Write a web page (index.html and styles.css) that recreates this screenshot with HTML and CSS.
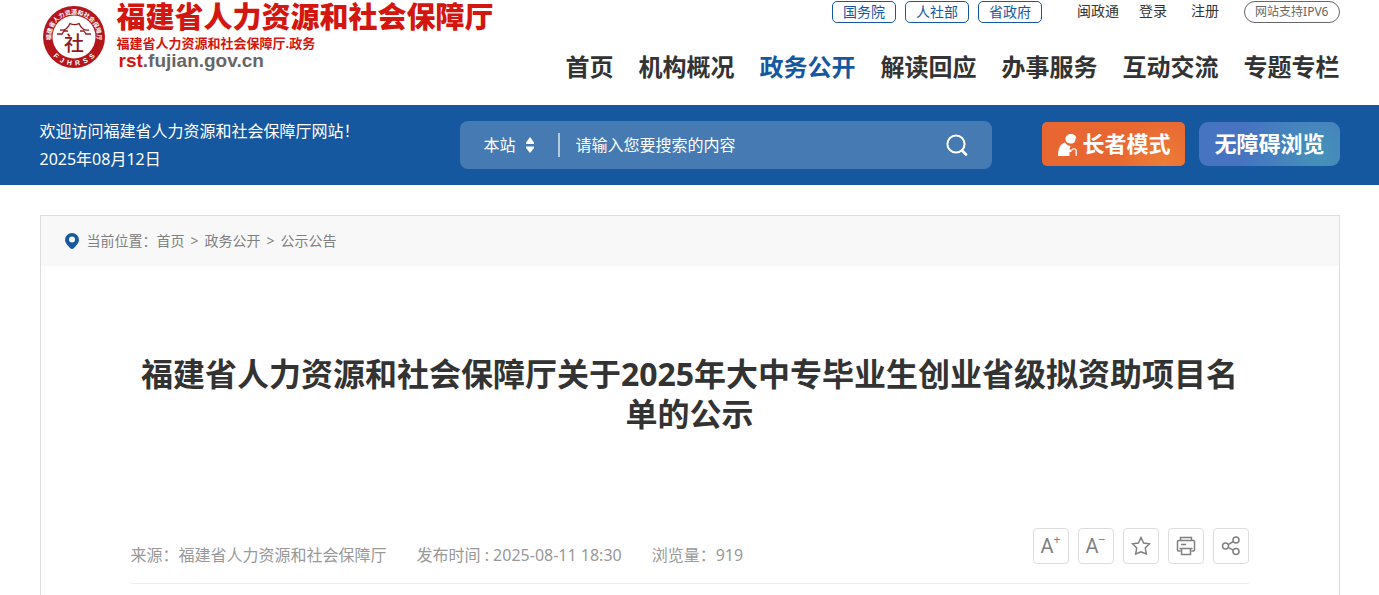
FILE: index.html
```html
<!DOCTYPE html>
<html lang="zh-CN">
<head>
  <meta charset="UTF-8">
  <title>福建省人力资源和社会保障厅</title>
  <meta name="viewport" content="width=device-width, initial-scale=1">
  <link rel="stylesheet" href="styles.css">
</head>
<body>

  <header class="header wrap">
    <a class="logo" href="#">
      <svg class="seal" viewBox="0 0 64 64" width="64" height="64" aria-hidden="true">
        <defs>
          <path id="arcTop" d="M12 43.500A23 23 0 1 1 52 43.500"/>
          <path id="arcBottom" d="M3.500 32A28.500 28.500 0 0 0 60.500 32"/>
        </defs>
        <circle cx="32" cy="32" r="31" fill="#b5161c"/>
        <circle cx="32" cy="32" r="21.500" fill="#fff"/>
        <text class="seal-top"><textPath href="#arcTop" startOffset="50%">福建省人力资源和社会保障厅</textPath></text>
        <text class="seal-bottom"><textPath href="#arcBottom" startOffset="50%">F&nbsp; J&nbsp; H&nbsp; R&nbsp; S&nbsp; S</textPath></text>
        <path d="M15 29H20L22 26M18 25C23 26 26 23 28 18.500C31 20 34 20 37 18.500C39 23 42 26 47 25M42 26L44 29H49M22 26H26M38 26H42" fill="none" stroke="#8f1a20" stroke-width="1.300"/>
        <text class="seal-mid" x="32" y="46">社</text>
      </svg>
      <span class="logo-text">
        <strong class="logo-name">福建省人力资源和社会保障厅</strong>
        <span class="logo-sub">福建省人力资源和社会保障厅.政务</span>
        <span class="logo-url"><b>rst</b>.fujian.gov.cn</span>
      </span>
    </a>

    <div class="header-right">
      <div class="top-links">
        <div class="gov-links">
          <a href="#">国务院</a>
          <a href="#">人社部</a>
          <a href="#">省政府</a>
        </div>
        <div class="user-links">
          <a href="#">闽政通</a>
          <a href="#">登录</a>
          <a href="#" class="reg">注册</a>
        </div>
        <a class="ipv6" href="#">网站支持IPV6</a>
      </div>
      <nav class="nav">
        <a href="#">首页</a>
        <a href="#">机构概况</a>
        <a href="#" class="active">政务公开</a>
        <a href="#">解读回应</a>
        <a href="#">办事服务</a>
        <a href="#">互动交流</a>
        <a href="#">专题专栏</a>
      </nav>
    </div>
  </header>

  <div class="banner">
    <div class="wrap banner-inner">
      <div class="welcome">
        <p>欢迎访问福建省人力资源和社会保障厅网站！</p>
        <p>2025年08月12日</p>
      </div>

      <form class="search">
        <label class="scope">
          <select aria-label="搜索范围">
            <option>本站</option>
          </select>
          <svg viewBox="0 0 8 16" width="8" height="16" aria-hidden="true">
            <path d="M4 0L8 5.500V7H0V5.500zM0 9.500H8V11L4 16L0 11z" fill="#fff"/>
          </svg>
        </label>
        <input type="text" aria-label="搜索" placeholder="请输入您要搜索的内容">
        <button type="submit" aria-label="搜索">
          <svg viewBox="0 0 22 22" width="22" height="22" fill="none" stroke="#fff" stroke-width="2" stroke-linecap="round">
            <circle cx="10" cy="10" r="8.600"/>
            <path d="M16 16.500l4 4" stroke-width="2.600"/>
          </svg>
        </button>
      </form>

      <div class="modes">
        <button type="button" class="elder">
          <svg viewBox="0 0 20 22" width="20" height="22" aria-hidden="true">
            <path d="M1 22C1 15 3 10 8 8.500C9.500 11 11.500 12 13.500 12L12.500 15L14.500 16.500V18H12.500V22z" fill="#fff"/>
            <path d="M8.500 5C8.500 2 11 0 14 0C17 0 19 1.500 19.500 4.500H18.500C18.500 8 17 9.500 14.500 9.500C11 9.500 8.500 8 8.500 5z" fill="#fff"/>
            <path d="M14.500 16.500C15 14.500 19.200 14 19.200 17V22" fill="none" stroke="#fff" stroke-width="1.300"/>
          </svg>
          长者模式
        </button>
        <button type="button" class="access">无障碍浏览</button>
      </div>
    </div>
  </div>

  <main class="wrap article">
    <div class="crumbs">
      <svg viewBox="0 0 14 16" width="14" height="16" aria-hidden="true">
        <path d="M7 0A7 7 0 0 1 14 7C14 10 11.500 12 9 15Q7 17 5 15C2.500 12 0 10 0 7A7 7 0 0 1 7 0zM7 3.500A3 3 0 1 0 7 9.500A3 3 0 1 0 7 3.500z" fill="#16589f" fill-rule="evenodd"/>
      </svg>
      <span>当前位置：</span>
      <a href="#">首页</a>
      <i>&gt;</i>
      <a href="#">政务公开</a>
      <i>&gt;</i>
      <a href="#">公示公告</a>
    </div>

    <div class="content">
      <h1>福建省人力资源和社会保障厅关于2025年大中专毕业生创业省级拟资助项目名单的公示</h1>

      <div class="meta">
        <div class="meta-text">
          <span>来源：福建省人力资源和社会保障厅</span>
          <span>发布时间 : 2025-08-11 18:30</span>
          <span>浏览量：919</span>
        </div>
        <div class="tools">
          <button type="button" aria-label="放大字体"><span class="letter">A</span><span class="sign">+</span></button>
          <button type="button" aria-label="缩小字体"><span class="letter">A</span><span class="sign">−</span></button>
          <button type="button" aria-label="收藏">
            <svg viewBox="0 0 20 20" width="20" height="20">
              <path d="M10 1.500L12.600 7L18.500 7.800L14.300 12L15.300 18L10 15.800L4.700 18L5.700 12L1.500 7.800L7.400 7z"/>
            </svg>
          </button>
          <button type="button" aria-label="打印">
            <svg viewBox="0 0 20 20" width="20" height="20">
              <path d="M4.500 4.500V1.500H15.500V4.500M4.500 15H2.500Q1.500 15 1.500 14V5.500Q1.500 4.500 2.500 4.500H17.500Q18.500 4.500 18.500 5.500V14Q18.500 15 17.500 15H15.500M5 8.500H10M3.500 12.500H16.500M5.500 12.500V18.500H14.500V12.500"/>
            </svg>
          </button>
          <button type="button" aria-label="分享">
            <svg viewBox="0 0 20 20" width="20" height="20">
              <circle cx="4.500" cy="10" r="3"/>
              <circle cx="15" cy="4" r="3"/>
              <circle cx="15" cy="15.500" r="3"/>
              <path d="M7.200 8.600L12.300 5.500M7.200 11.400L12.300 14.200"/>
            </svg>
          </button>
        </div>
      </div>
    </div>
  </main>

</body>
</html>
```
FILE: styles.css
```css
* { box-sizing: border-box; }

body {
  margin: 0;
  font-family: "Noto Sans", "Noto Sans CJK SC", sans-serif;
  font-size: 16px;
  color: #333;
  background: #fff;
}

a {
  color: inherit;
  text-decoration: none;
}

p { margin: 0; }

button, input, select {
  font-family: inherit;
  border: none;
  padding: 0;
  background: none;
}

button { cursor: pointer; }

.wrap {
  width: calc(100% - 78px);
  max-width: 1300px;
  margin: 0 auto;
}

/* header */
.header {
  display: flex;
  justify-content: space-between;
  height: 105px;
}

.logo {
  display: flex;
  gap: 11px;
  padding-left: 2px;
}

.seal { margin-top: 5px; }

.seal text { text-anchor: middle; }

.seal-top {
  font-size: 6px;
  font-weight: bold;
  fill: #fff;
}

.seal-bottom {
  font-family: "Liberation Sans", sans-serif;
  font-size: 7px;
  font-weight: bold;
  fill: #fff;
}

.seal-mid {
  font-size: 20px;
  font-weight: 500;
  fill: #8f1a20;
}

.logo-text {
  display: flex;
  flex-direction: column;
  white-space: nowrap;
}

.logo-name {
  font-size: 29px;
  line-height: 34px;
  font-weight: 900;
  color: #d3160f;
}

.logo-sub {
  font-size: 13px;
  line-height: 18px;
  font-weight: bold;
  color: #d3160f;
}

.logo-url {
  padding-left: 2px;
  font-family: "Liberation Sans", Arial, sans-serif;
  font-size: 19px;
  line-height: 18px;
  font-weight: bold;
  color: #666;
}

.logo-url b { color: #d3160f; }

.header-right {
  display: flex;
  flex-direction: column;
  align-items: flex-end;
  padding-top: 1px;
}

.top-links {
  display: flex;
  font-size: 14px;
  line-height: 20px;
}

.gov-links {
  display: flex;
  gap: 9px;
  margin-right: 35px;
}

.gov-links a {
  padding: 0 10px;
  border: 1px solid #16589f;
  border-radius: 5px;
  color: #16589f;
}

.user-links {
  display: flex;
  gap: 20px;
  margin-right: 25px;
}

.user-links .reg { margin-left: 4px; }

.ipv6 {
  padding: 0 10px;
  border: 1px solid #666;
  border-radius: 11px;
  font-size: 12px;
  color: #666;
}

.nav {
  display: flex;
  gap: 25px;
  margin-top: 24px;
  font-size: 24px;
  line-height: 40px;
  font-weight: bold;
  white-space: nowrap;
}

.nav .active { color: #16589f; }

/* blue bar */
.banner {
  background: #16589f;
  color: #fff;
}

.banner-inner {
  display: flex;
  align-items: center;
  height: 80px;
}

.welcome {
  width: 420px;
  line-height: 28px;
}

.search {
  display: flex;
  align-items: center;
  flex: 1;
  max-width: 532px;
  height: 48px;
  padding: 0 24px;
  border-radius: 8px;
  background: #457ab3;
}

.scope {
  display: flex;
  align-items: center;
  gap: 10px;
  height: 24px;
  padding-right: 24px;
  border-right: 2px solid #b5cae1;
}

.scope select {
  appearance: none;
  width: 32px;
  font-size: 16px;
  color: #fff;
}

.search input {
  flex: 1;
  min-width: 0;
  padding-left: 16px;
  font-size: 16px;
  color: #fff;
  outline: none;
}

.search input::placeholder { color: #fff; }

.search button {
  display: flex;
}

.modes {
  display: flex;
  gap: 14px;
  margin-left: auto;
  padding-bottom: 2px;
}

.modes button {
  display: flex;
  align-items: center;
  gap: 5px;
  height: 44px;
  padding: 0 15px 4px;
  font-size: 22px;
  font-weight: bold;
  color: #fff;
  white-space: nowrap;
}

.modes svg { margin-top: 5px; }

.modes .elder {
  border-radius: 5px;
  background: radial-gradient(circle at 85% 100%, #ed7d38, #e86632 40%);
}

.modes .access {
  border-radius: 9px;
  background: radial-gradient(circle at 85% 75%, #4592b8, #4674c1 60%);
}

/* article */
.article {
  margin-top: 30px;
  border: 1px solid #ddd;
}

.crumbs {
  display: flex;
  align-items: center;
  height: 50px;
  padding: 0 24px 2px;
  background: #f8f8f8;
  font-size: 14px;
  color: #808080;
}

.crumbs svg {
  margin-top: 2px;
  margin-right: 8px;
}

.crumbs i {
  margin: 0 6px;
  font-style: normal;
}

.content {
  padding: 88px 90px 60px;
}

h1 {
  margin: 0;
  font-size: 32px;
  line-height: 40px;
  text-align: center;
}

.meta {
  display: flex;
  justify-content: space-between;
  margin-top: 94px;
  padding-bottom: 16px;
  border-bottom: 1px solid #eee;
}

.meta-text {
  display: flex;
  gap: 30px;
  padding-top: 15px;
  line-height: 24px;
  color: #999;
}

.tools {
  display: flex;
  gap: 9px;
}

.tools button {
  display: flex;
  align-items: center;
  justify-content: center;
  width: 36px;
  height: 36px;
  border: 1px solid #ddd;
  border-radius: 4px;
  color: #808080;
}

.tools svg {
  fill: none;
  stroke: #808080;
  stroke-width: 1.5;
}

.letter {
  font-family: Roboto, sans-serif;
  font-size: 20px;
}

.sign {
  align-self: flex-start;
  font-size: 12px;
  line-height: 22px;
}
```
